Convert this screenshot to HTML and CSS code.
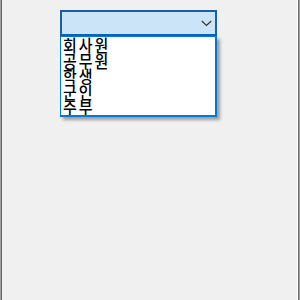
FILE: index.html
```html
<!DOCTYPE html>
<html lang="ko">

<head>
    <meta charset="UTF-8">
    <title>직업 선택</title>
    <link rel="stylesheet" href="styles.css">
</head>

<body>
    <div class="window">
        <div class="combo-wrap">
            <div class="combo">
                <span class="combo-text"></span>
                <svg class="chevron" width="11" height="7" viewBox="0 0 11 7">
                    <path d="M0.8 1 L5.5 5.5 L10.2 1" fill="none" stroke="#333" stroke-width="1.2"/>
                </svg>
            </div>
            <ul class="dropdown">
                <li>회사원</li>
                <li>공무원</li>
                <li>학생</li>
                <li>군인</li>
                <li>주부</li>
            </ul>
        </div>
    </div>
</body>

</html>
```

FILE: styles.css
```css
html,
body {
    margin: 0;
    padding: 0;
    height: 100%;
}

body {
    background-color: #f0f0f0;
    font-family: "Noto Sans CJK KR", "Noto Sans", sans-serif;
}

.window {
    box-sizing: border-box;
    height: 300px;
    width: 300px;
    border-left: 1px solid #a0a0a0;
    border-right: 1px solid #a0a0a0;
    box-shadow: inset 1px 0 0 #696969, inset -1px 0 0 #696969, inset -2px 0 0 #fff;
    padding: 10px 0 0 59px;
}

.combo-wrap {
    position: relative;
    width: 157px;
}

.combo {
    box-sizing: border-box;
    height: 26px;
    background-color: #cce4f7;
    border: 2px solid #1560a8;
    display: flex;
    align-items: center;
    justify-content: flex-end;
    padding-right: 3px;
}

.chevron {
    display: block;
}

.dropdown {
    position: absolute;
    top: 26px;
    left: 0;
    box-sizing: border-box;
    width: 157px;
    height: 81px;
    margin: 0;
    padding: 0 0 0 2px;
    list-style: none;
    background-color: #fff;
    border: 1px solid #0078d7;
    border-width: 1px 2px 2px 1px;
    box-shadow: 3px 3px 3px rgba(0, 0, 0, 0.35);
    overflow: hidden;
}

.dropdown li {
    font-size: 15px;
    font-weight: 500;
    line-height: 15.5px;
    height: 15.5px;
    letter-spacing: 2px;
    color: #000;
    transform: scaleY(1.1);
    transform-origin: top left;
}
```
